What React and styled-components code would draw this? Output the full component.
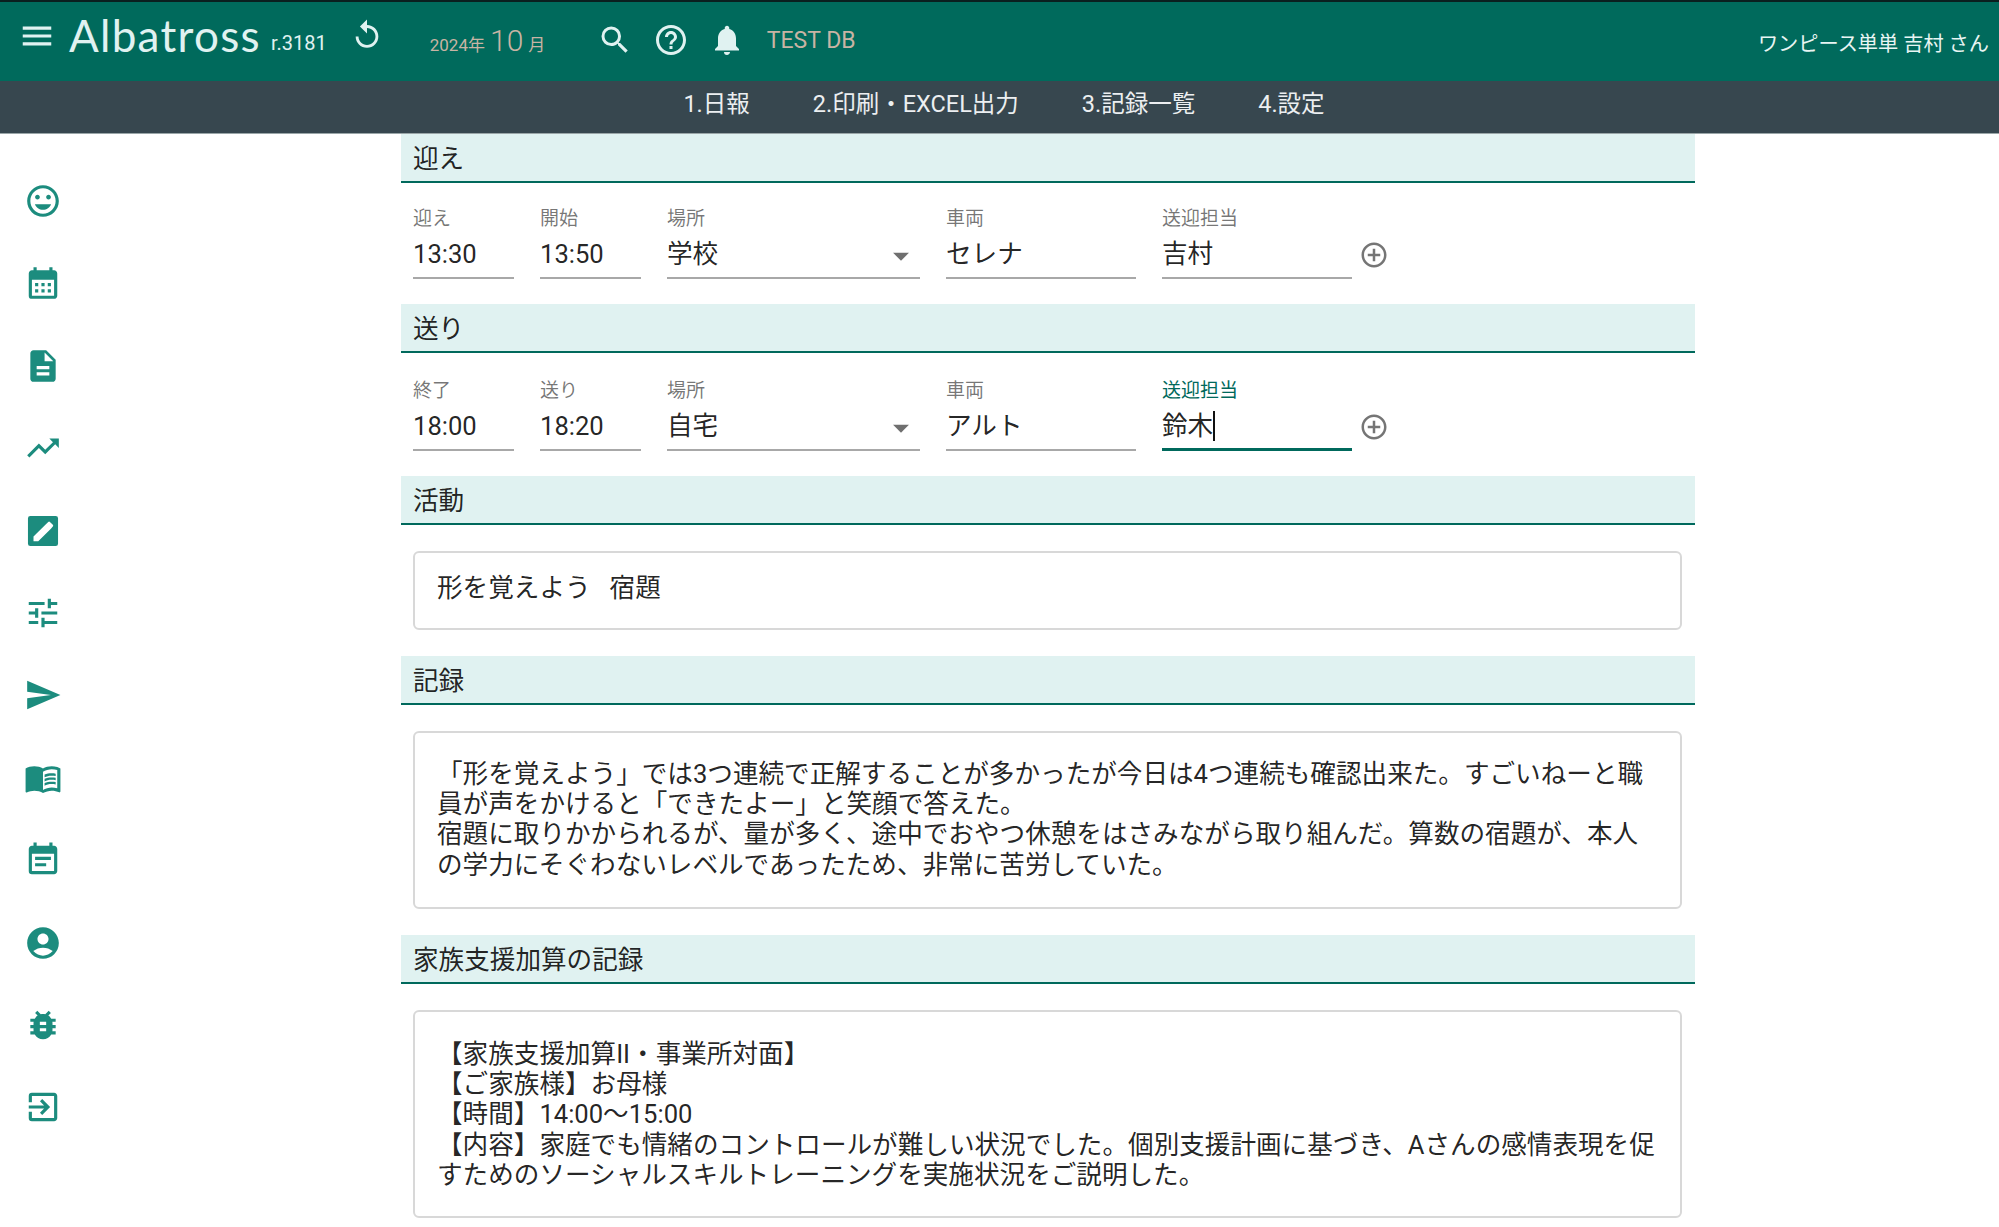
import React from "react";
import styled, { createGlobalStyle } from "styled-components";
import {
  MdMenu, MdReplay, MdSearch, MdHelpOutline, MdNotifications, MdMood, MdCalendarMonth,
  MdDescription, MdTrendingUp, MdTune, MdSend, MdMenuBook, MdEventNote, MdAccountCircle,
  MdBugReport, MdExitToApp, MdAddCircleOutline, MdArrowDropDown,
} from "react-icons/md";

const GlobalStyle = createGlobalStyle`
  html, body { margin: 0; padding: 0; background: #fff; }
  body {
    font-family: Roboto, "Noto Sans CJK JP", sans-serif;
    color: rgba(0, 0, 0, .87);
    overflow: hidden;
  }
`;

const Page = styled.div`
  width: 1999px;
  height: 1227px;
  overflow: hidden;
`;

const TopBar = styled.header`
  height: 81px;
  box-sizing: border-box;
  border-top: 2px solid #0a1f1f;
  background: #006a5c;
  color: #fff;
  display: flex;
  align-items: center;
  padding: 0 10px 6px 18px;
`;

const MenuButton = styled(MdMenu)`
  font-size: 38px;
  margin-top: -6px;
  color: #e0f2f1;
`;

const Logo = styled.div`
  margin-left: 13px;
  margin-top: -8px;
  font-family: Lato, sans-serif;
  font-weight: 400;
  font-size: 44px;
  letter-spacing: 1.3px;
  color: #e0f2f1;
  line-height: 1;
`;

const Release = styled.span`
  margin-left: 10px;
  margin-top: 8px;
  font-size: 20px;
  color: #e0f2f1;
`;

const ReplayIcon = styled(MdReplay)`
  font-size: 34px;
  margin-left: 23px;
  margin-top: -7px;
  color: #e0f2f1;
`;

const MonthPicker = styled.div`
  margin-left: 46px;
  margin-top: 4px;
  color: #c8b4a4;
  font-size: 17px;
  display: flex;
  align-items: baseline;
  width: 119px;
  b {
    font-weight: 300;
    font-size: 30px;
    margin: 0 5px;
  }
`;

const ToolIcons = styled.div`
  margin-left: 48px;
  margin-top: 2px;
  display: flex;
  gap: 20px;
  align-items: center;
  font-size: 36px;
  color: #e0f2f1;
`;

const DbName = styled.div`
  margin-left: 22px;
  margin-top: 4px;
  font-size: 23px;
  color: #c8b4a4;
`;

const UserName = styled.div`
  margin-left: auto;
  margin-top: 7px;
  font-size: 20.2px;
  color: #e8f5f3;
`;

const NavBar = styled.nav`
  height: 53px;
  box-sizing: border-box;
  background: #37474f;
  display: flex;
  justify-content: center;
  align-items: center;
  gap: 63px;
  padding: 0 0 10px 9px;
  font-size: 23.5px;
  color: #eceff1;
  border-bottom: 1px solid #9aa6a8;
`;

const Body = styled.div`
  display: flex;
`;

const SideBar = styled.aside`
  width: 86px;
  padding-top: 48px;
  display: flex;
  flex-direction: column;
  align-items: center;
  gap: 44.4px;
  font-size: 38px;
  color: #1c8c7e;
  svg { display: block; }
`;

const Main = styled.main`
  margin-left: 315px;
  width: 1294px;
`;

const SectionTitle = styled.div`
  height: 47px;
  background: #e0f2f1;
  border-bottom: 2px solid #00695c;
  padding-left: 12px;
  font-size: 25.6px;
  line-height: 50px;
`;

const FieldRow = styled.div`
  display: flex;
  padding: ${(p) => p.$top}px 0 0 12px;
  height: 98px;
  box-sizing: border-box;
  margin-bottom: ${(p) => p.$bottom}px;
`;

const Field = styled.div`
  width: ${(p) => p.$width}px;
  margin-right: ${(p) => p.$gap}px;
  position: relative;
`;

const FieldLabel = styled.div`
  font-size: 19px;
  line-height: 24px;
  color: ${(p) => (p.$focused ? "#00695c" : "rgba(0, 0, 0, .55)")};
`;

const FieldValue = styled.div`
  height: 48px;
  box-sizing: border-box;
  font-size: 25.6px;
  line-height: 46px;
  border-bottom: ${(p) => (p.$focused ? "3px solid #00695c" : "2px solid #a8a8a8")};
`;

const Caret = styled.span`
  display: inline-block;
  width: 1.5px;
  height: 30px;
  background: #111;
  vertical-align: -6px;
`;

const DropArrow = styled(MdArrowDropDown)`
  position: absolute;
  right: 0;
  top: 30px;
  font-size: 38px;
  color: #6f6f6f;
`;

const AddIcon = styled(MdAddCircleOutline)`
  font-size: 30px;
  margin: 33px 0 0 7px;
  color: #757575;
`;

const NoteBox = styled.div`
  margin: 26px 13px 26px 12px;
  border: 2px solid #d8d8d8;
  border-radius: 6px;
  box-sizing: border-box;
  height: ${(p) => p.$height}px;
  padding: ${(p) => p.$top}px 22px 0;
  font-size: 25.6px;
  line-height: 30.2px;
  white-space: nowrap;
`;

const sideIcons = [
  <MdMood key="mood" />,
  <MdCalendarMonth key="calendar" />,
  <MdDescription key="doc" />,
  <MdTrendingUp key="trend" />,
  <svg key="edit" width="1em" height="1em" viewBox="0 0 24 24" fill="currentColor">
    <path fillRule="evenodd" d="M4 2.5h16A1.5 1.5 0 0 1 21.5 4v16a1.5 1.5 0 0 1-1.5 1.5H4A1.5 1.5 0 0 1 2.5 20V4A1.5 1.5 0 0 1 4 2.5zM6 15.5v3h3l8-8-3-3-8 8zm12.2-6.3a.8.8 0 0 0 0-1.1l-1.8-1.8a.8.8 0 0 0-1.1 0l-1.3 1.3 3 3 1.2-1.4z" />
  </svg>,
  <MdTune key="tune" />,
  <MdSend key="send" />,
  <MdMenuBook key="book" />,
  <MdEventNote key="note" />,
  <MdAccountCircle key="account" />,
  <MdBugReport key="bug" />,
  <MdExitToApp key="exit" />,
];

const TransferRow = ({ labels, values, focused, top, bottom }) => (
  <FieldRow $top={top} $bottom={bottom}>
    <Field $width={101} $gap={26}>
      <FieldLabel>{labels[0]}</FieldLabel>
      <FieldValue>{values[0]}</FieldValue>
    </Field>
    <Field $width={101} $gap={26}>
      <FieldLabel>{labels[1]}</FieldLabel>
      <FieldValue>{values[1]}</FieldValue>
    </Field>
    <Field $width={253} $gap={26}>
      <FieldLabel>場所</FieldLabel>
      <FieldValue>{values[2]}</FieldValue>
      <DropArrow />
    </Field>
    <Field $width={190} $gap={26}>
      <FieldLabel>車両</FieldLabel>
      <FieldValue>{values[3]}</FieldValue>
    </Field>
    <Field $width={190} $gap={0}>
      <FieldLabel $focused={focused}>送迎担当</FieldLabel>
      <FieldValue $focused={focused}>
        {values[4]}
        {focused && <Caret />}
      </FieldValue>
    </Field>
    <AddIcon />
  </FieldRow>
);

const App = () => {
  return (
    <Page>
      <GlobalStyle />
      <TopBar>
        <MenuButton />
        <Logo>Albatross</Logo>
        <Release>r.3181</Release>
        <ReplayIcon />
        <MonthPicker>
          2024年<b>10</b>月
        </MonthPicker>
        <ToolIcons>
          <MdSearch />
          <MdHelpOutline />
          <MdNotifications />
        </ToolIcons>
        <DbName>TEST DB</DbName>
        <UserName>ワンピース単単 吉村 さん</UserName>
      </TopBar>
      <NavBar>
        <span>1.日報</span>
        <span>2.印刷・EXCEL出力</span>
        <span>3.記録一覧</span>
        <span>4.設定</span>
      </NavBar>
      <Body>
        <SideBar>{sideIcons}</SideBar>
        <Main>
          <SectionTitle>迎え</SectionTitle>
          <TransferRow
            labels={["迎え", "開始"]}
            values={["13:30", "13:50", "学校", "セレナ", "吉村"]}
            top={24}
            bottom={23}
          />
          <SectionTitle>送り</SectionTitle>
          <TransferRow
            labels={["終了", "送り"]}
            values={["18:00", "18:20", "自宅", "アルト", "鈴木"]}
            focused
            top={26}
            bottom={25}
          />
          <SectionTitle>活動</SectionTitle>
          <NoteBox $height={79} $top={20}>形を覚えよう&nbsp;&nbsp;&nbsp;宿題</NoteBox>
          <SectionTitle>記録</SectionTitle>
          <NoteBox $height={178} $top={26}>
            「形を覚えよう」では3つ連続で正解することが多かったが今日は4つ連続も確認出来た。すごいねーと職<br />
            員が声をかけると「できたよー」と笑顔で答えた。<br />
            宿題に取りかかられるが、量が多く、途中でおやつ休憩をはさみながら取り組んだ。算数の宿題が、本人<br />
            の学力にそぐわないレベルであったため、非常に苦労していた。
          </NoteBox>
          <SectionTitle>家族支援加算の記録</SectionTitle>
          <NoteBox $height={208} $top={27}>
            【家族支援加算II・事業所対面】<br />
            【ご家族様】お母様<br />
            【時間】14:00～15:00<br />
            【内容】家庭でも情緒のコントロールが難しい状況でした。個別支援計画に基づき、Aさんの感情表現を促<br />
            すためのソーシャルスキルトレーニングを実施状況をご説明した。
          </NoteBox>
        </Main>
      </Body>
    </Page>
  );
};

export default App;
